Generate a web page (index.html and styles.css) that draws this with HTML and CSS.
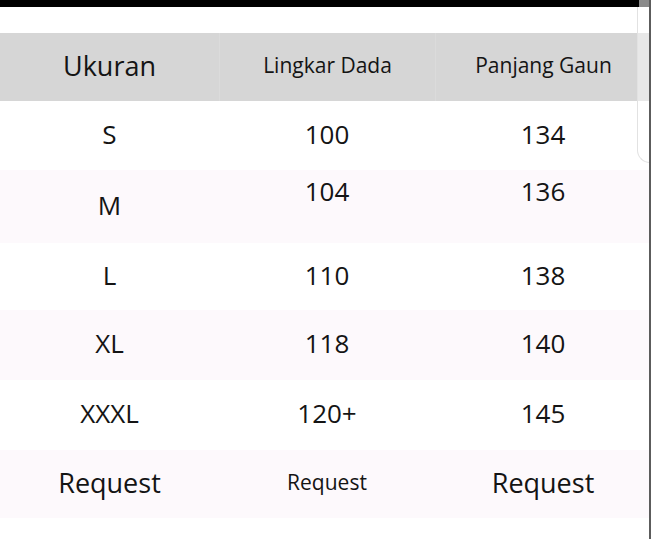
FILE: index.html
```html
<!DOCTYPE html>
<html lang="id">
<head>
<meta charset="utf-8">
<title>Ukuran</title>
<link rel="stylesheet" href="styles.css">
</head>
<body>
<div class="topbar"></div>
<div class="spacer"></div>
<div class="table">
  <div class="row head">
    <div class="cell big">Ukuran</div>
    <div class="cell small">Lingkar Dada</div>
    <div class="cell small">Panjang Gaun</div>
  </div>
  <div class="row h69">
    <div class="cell">S</div>
    <div class="cell">100</div>
    <div class="cell">134</div>
  </div>
  <div class="row pink h73">
    <div class="cell">M</div>
    <div class="cell top">104</div>
    <div class="cell top">136</div>
  </div>
  <div class="row h67">
    <div class="cell">L</div>
    <div class="cell">110</div>
    <div class="cell">138</div>
  </div>
  <div class="row pink h70">
    <div class="cell">XL</div>
    <div class="cell">118</div>
    <div class="cell">140</div>
  </div>
  <div class="row h70">
    <div class="cell">XXXL</div>
    <div class="cell">120+</div>
    <div class="cell">145</div>
  </div>
  <div class="row pink h68">
    <div class="cell big">Request</div>
    <div class="cell small">Request</div>
    <div class="cell big">Request</div>
  </div>
</div>
<div class="panel"></div>
<div class="edge"></div>
<div class="notch"></div>
</body>
</html>
```
FILE: styles.css
```css
html, body {
  margin: 0;
  padding: 0;
  background: #ffffff;
  width: 651px;
  height: 539px;
  overflow: hidden;
}
body {
  font-family: "Open Sans", "Noto Sans", sans-serif;
  color: #141414;
  position: relative;
}
.topbar {
  height: 7px;
  background: #000;
}
.spacer {
  height: 26px;
}
.table {
  display: flex;
  flex-direction: column;
}
.row {
  display: grid;
  grid-template-columns: 219px 216px 216px;
  background: #ffffff;
}
.row.pink {
  background: #fdf9fc;
}
.row.head {
  height: 68px;
  background: #d6d6d6;
}
.row.head .cell + .cell {
  border-left: 1px solid #dbdbdb;
}
.h67 { height: 67px; }
.h68 { height: 68px; }
.h69 { height: 69px; }
.h70 { height: 70px; }
.h73 { height: 73px; }
.cell {
  display: flex;
  align-items: center;
  justify-content: center;
  font-size: 26px;
  line-height: 1;
  padding-bottom: 4px;
}
.cell.big {
  font-size: 27px;
}
.cell.small {
  font-size: 21px;
}
.cell.top {
  align-items: flex-start;
  padding-top: 8px;
  padding-bottom: 0;
}
.panel {
  position: absolute;
  left: 637px;
  top: 7px;
  width: 12px;
  height: 155px;
  border-left: 1px solid #e2e2e2;
  border-bottom: 1px solid #e2e2e2;
  border-bottom-left-radius: 16px;
  background: rgba(255, 255, 255, 0.45);
}
.edge {
  position: absolute;
  right: 0;
  top: 0;
  width: 2px;
  height: 539px;
  background: #5c5c5c;
}
.notch {
  position: absolute;
  left: 639px;
  top: 0;
  width: 10px;
  height: 7px;
  background: #8a8a8a;
}
```
